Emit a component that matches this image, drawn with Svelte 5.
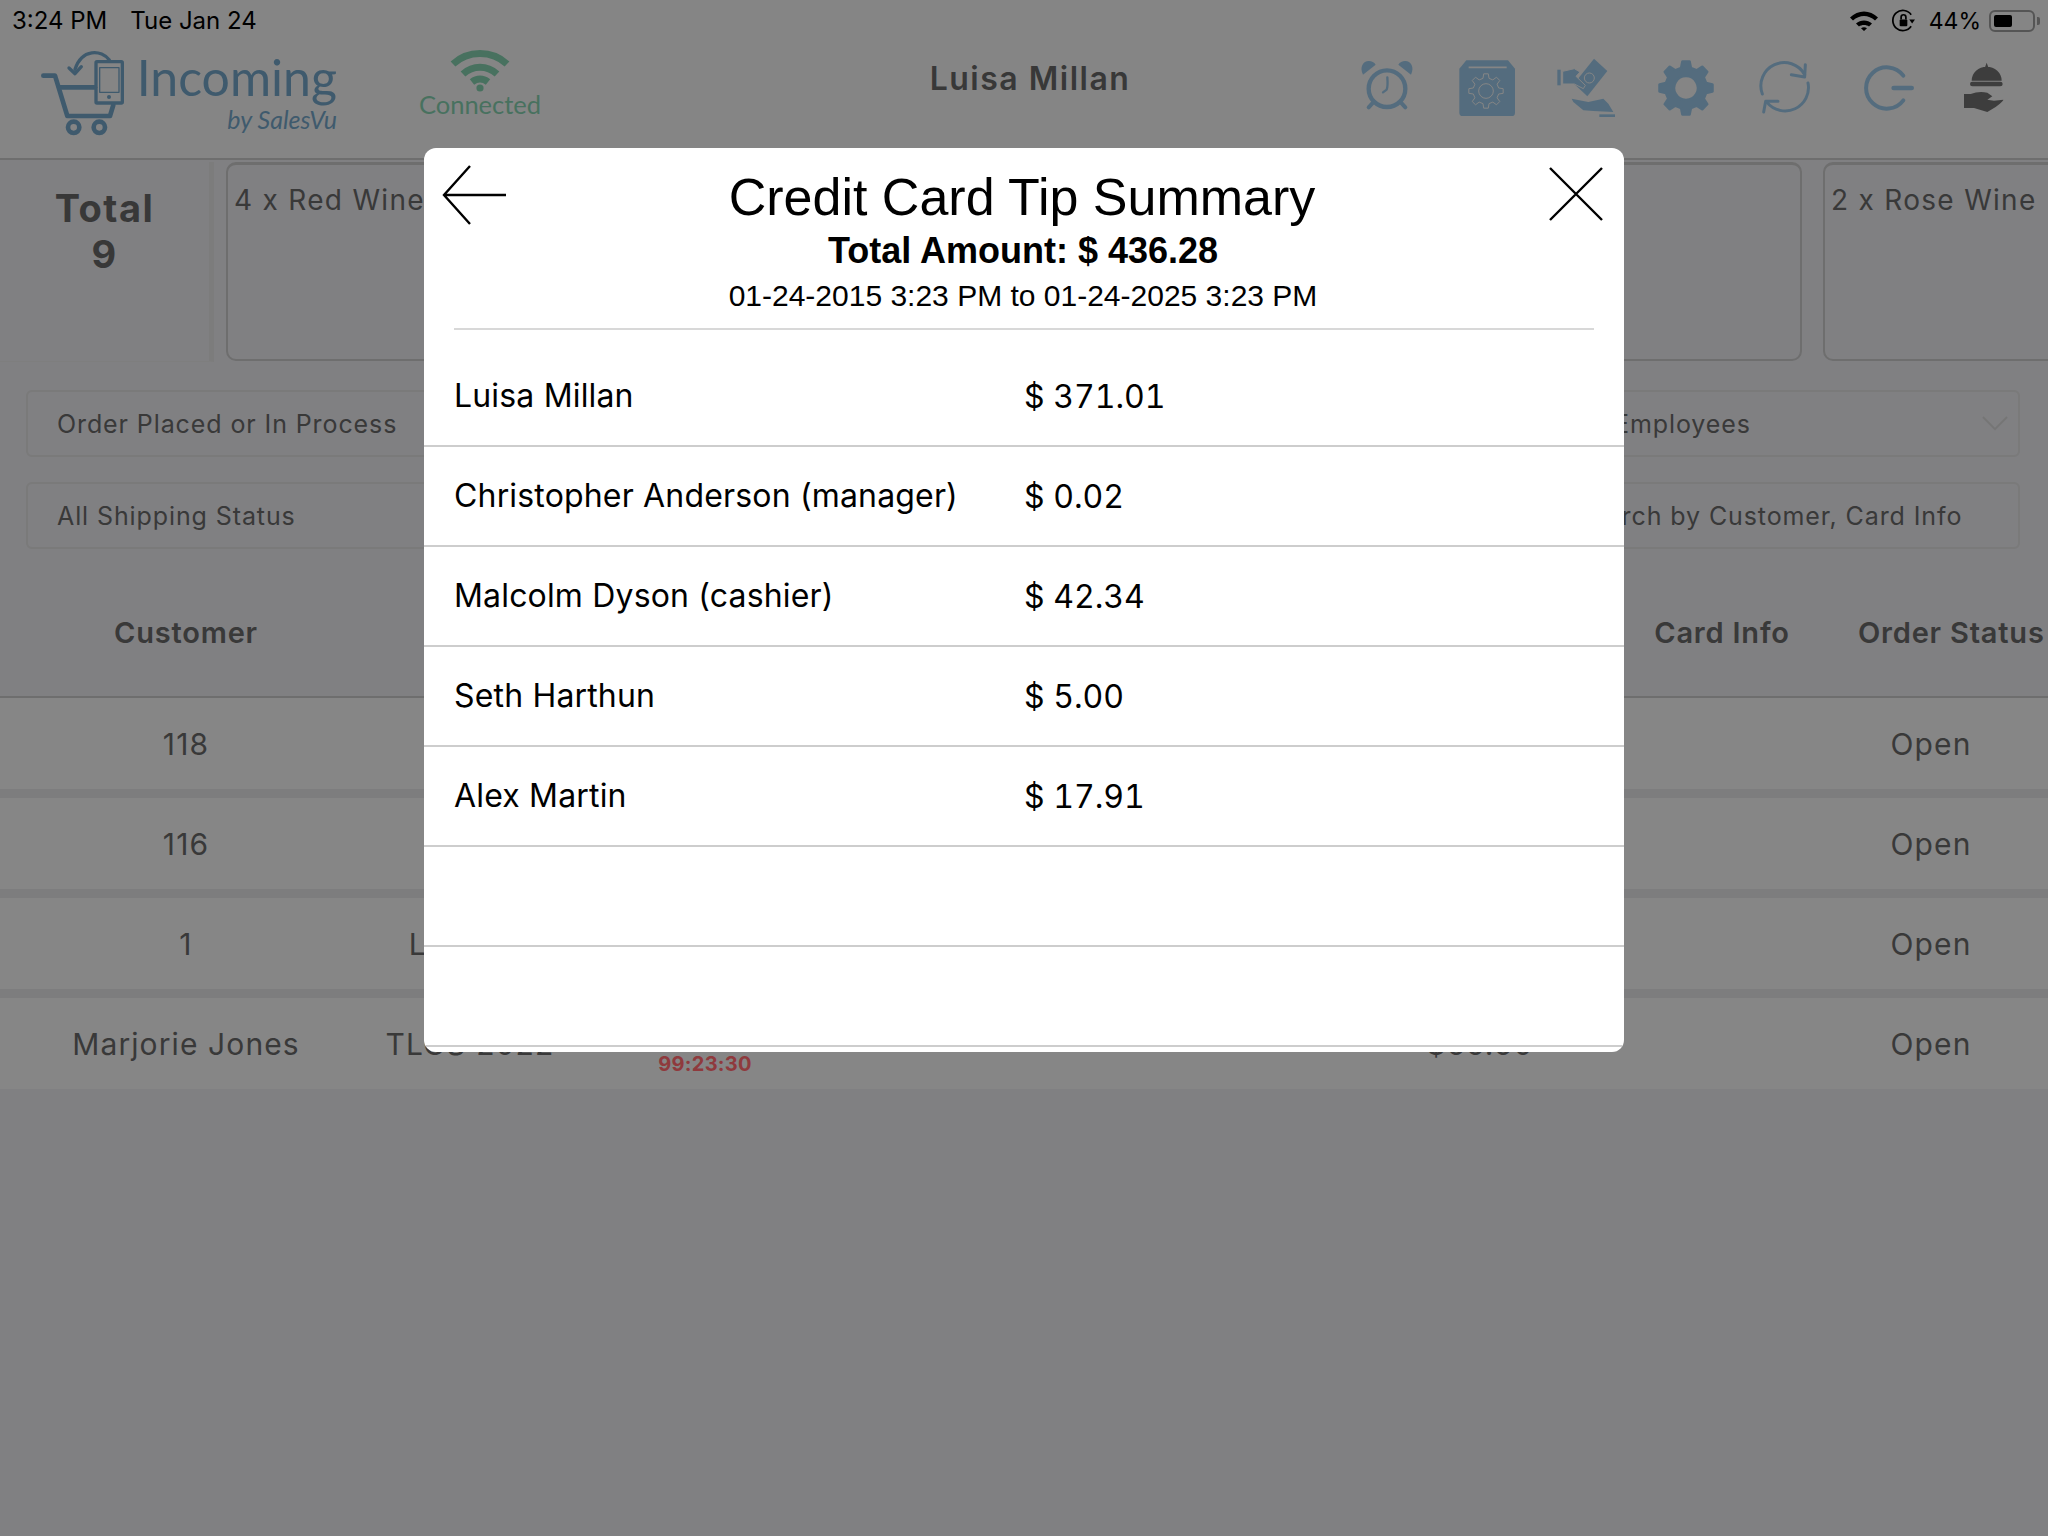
<script lang="ts">
	const cards = ['4 x Red Wine', '', '', '', '', '2 x Rose Wine'];

	const orders = [
		{ customer: '118', location: '', timer: '', price: '' },
		{ customer: '116', location: '', timer: '', price: '' },
		{ customer: '1', location: 'Lobby 2', timer: '', price: '' },
		{ customer: 'Marjorie Jones', location: 'TLCS 2022', timer: '99:23:30', price: '$55.50' }
	];

	const tips = [
		{ name: 'Luisa Millan', amount: '$ 371.01' },
		{ name: 'Christopher Anderson (manager)', amount: '$ 0.02' },
		{ name: 'Malcolm Dyson (cashier)', amount: '$ 42.34' },
		{ name: 'Seth Harthun', amount: '$ 5.00' },
		{ name: 'Alex Martin', amount: '$ 17.91' },
		{ name: '', amount: '' },
		{ name: '', amount: '' }
	];

	// toothed wheel, used by the settings icon and the one on the box
	function gear(cx: number, cy: number, outer: number, inner: number, teeth: number) {
		const step = (Math.PI * 2) / teeth;
		const pts: string[] = [];
		for (let i = 0; i < teeth; i++) {
			const a = i * step - Math.PI / 2;
			const spots = [
				[inner, a - step * 0.3],
				[outer, a - step * 0.17],
				[outer, a + step * 0.17],
				[inner, a + step * 0.3]
			];
			for (const [r, t] of spots) {
				pts.push(`${(cx + r * Math.cos(t)).toFixed(1)} ${(cy + r * Math.sin(t)).toFixed(1)}`);
			}
		}
		return 'M' + pts.join('L') + 'Z';
	}
</script>

<div class="page">
	<header class="topbar">
		<div class="brand">
			<svg class="cart" viewBox="0 0 300 300">
				<path class="b" d="M40 107H75L112 228H240L250 195" />
				<path class="b" d="M88 142H195" />
				<circle class="b" cx="131" cy="262" r="17" />
				<circle class="b" cx="208" cy="262" r="17" />
				<rect class="b thin" x="198" y="65" width="79" height="124" rx="3" />
				<rect class="b hair" x="209" y="83" width="58" height="74" />
				<circle class="dot" cx="237" cy="171" r="6" />
				<path class="b thin" d="M238 60C215 28 155 25 135 88" />
				<path class="b thin" d="M117 84L135 101L154 80" />
			</svg>
			<div class="brand-text">
				<span class="brand-name">Incoming</span>
				<span class="brand-by">by SalesVu</span>
			</div>
		</div>

		<div class="conn">
			<svg viewBox="0 0 60 42" width="60" height="42">
				<path d="M3 14C18 0 42 0 57 14" />
				<path d="M13 24C23 15 37 15 47 24" />
				<path d="M22 32C27 28 33 28 38 32" />
				<circle cx="30" cy="38" r="3.6" />
			</svg>
			<span>Connected</span>
		</div>

		<div class="user">Luisa Millan</div>

		<div class="actions">
			<span class="slot">
				<svg viewBox="0 0 180 180" class="ico">
					<circle class="line clock-ring" cx="90" cy="92" r="55" />
					<path class="line hand" d="M91 58Q93 85 89 95L78 103" />
					<path class="solid" d="M18 50C6 26 20 8 36 9C44 9 52 13 56 20Z" />
					<path class="solid" d="M162 50C174 26 160 8 144 9C136 9 128 13 124 20Z" />
					<path class="line" d="M48 134L35 148M132 134L145 148" />
				</svg>
			</span>
			<span class="slot">
				<svg viewBox="0 0 180 180" class="ico">
					<path class="solid" d="M28 7H153L174 32V164Q174 174 164 174H17Q7 174 7 164V32Z" />
					<path class="cut" d="M35 28H149" />
					<path class="cut thin-cut" d={gear(87, 99, 52, 39, 8)} />
					<circle class="cut thin-cut" cx="87" cy="99" r="22" />
				</svg>
			</span>
			<span class="slot">
				<svg viewBox="0 0 180 180" class="ico">
					<path class="solid" d="M114 2L154 39L94 115L54 77Z" />
					<circle class="solid" cx="100" cy="60" r="21" />
					<circle class="cut thin-cut" cx="100" cy="60" r="15" />
					<path class="solid" d="M4 35H14V82H4Z" />
					<path class="solid edged" d="M20 40L55 32L72 42L60 55L88 82L82 92L55 78H20Z" />
					<path class="solid" d="M47 122L97 132L142 122L157 137L172 162L112 159L82 157L52 132Z" />
					<path class="solid" d="M130 169H177V177H130Z" />
				</svg>
			</span>
			<span class="slot">
				<svg viewBox="0 0 180 180" class="ico">
					<path class="solid round" fill-rule="evenodd" d={gear(90, 90, 80, 62, 8) + 'M90 54a36 36 0 1 0 .01 0Z'} />
				</svg>
			</span>
			<span class="slot">
				<svg viewBox="0 0 180 180" class="ico">
					<path class="line mid" d="M149 50A70 70 0 0 0 22 108" />
					<path class="line mid" d="M159 75A70 70 0 0 1 36 133" />
					<path class="line mid" d="M109 50L149 57L151 20" />
					<path class="line mid" d="M69 130L32 130L26 162" />
				</svg>
			</span>
			<span class="slot">
				<svg viewBox="0 0 180 180" class="ico">
					<path class="line" d="M145 53A62 62 0 1 0 145 127" />
					<path class="line bar" d="M116 90H170" />
				</svg>
			</span>
			<span class="slot">
				<svg viewBox="0 0 180 180" class="ico dark">
					<path class="solid" d="M53 68A45 42 0 0 1 143 68ZM93 28L98 14L103 28Z" />
					<rect class="solid" x="48" y="71" width="98" height="14" rx="7" />
					<path class="solid" d="M30 108H50Q75 98 100 104L115 115L100 125L120 128L148 125Q150 128 125 147L100 162L60 150H30Z" />
				</svg>
			</span>
		</div>
	</header>

	<section class="strip">
		<div class="total">
			<span>Total</span>
			<span>9</span>
		</div>
		{#each cards as card}
			<div class="card">{card}</div>
		{/each}
	</section>

	<section class="filters">
		<div class="filter-row">
			<div class="field left">Order Placed or In Process</div>
			<div class="field right">
				All Employees
				<svg viewBox="0 0 28 16" width="26" height="15"><path d="M1 1L14 14L27 1" /></svg>
			</div>
		</div>
		<div class="filter-row">
			<div class="field left">All Shipping Status</div>
			<div class="field right">Search by Customer, Card Info</div>
		</div>
	</section>

	<div class="thead">
		<span class="c1">Customer</span>
		<span class="c6">Card Info</span>
		<span class="c7">Order Status</span>
	</div>

	{#each orders as order}
		<div class="row">
			<span class="c1">{order.customer}</span>
			<span class="c2">{order.location}</span>
			<span class="c3">{order.timer}</span>
			<span class="c5">{order.price}</span>
			<span class="c7b">Open</span>
		</div>
	{/each}
</div>

<div class="scrim">
	<div class="modal">
		<div class="modal-head">
			<button type="button" class="icon-btn" aria-label="Back">
				<svg viewBox="0 0 66 62" width="66" height="62"><path d="M65 31H3M29 2L3 31L29 60" /></svg>
			</button>
			<div class="heading">
				<h2>Credit Card Tip Summary</h2>
				<p class="amount">Total Amount: $ 436.28</p>
				<p class="range">01-24-2015 3:23 PM to 01-24-2025 3:23 PM</p>
			</div>
			<button type="button" class="icon-btn close" aria-label="Close">
				<svg viewBox="0 0 54 54" width="54" height="54"><path d="M1 1L53 53M53 1L1 53" /></svg>
			</button>
		</div>
		<div class="rule"></div>
		<ul class="tips">
			{#each tips as tip}
				<li>
					<span class="tip-name">{tip.name}</span>
					<span class="tip-amount">{tip.amount}</span>
				</li>
			{/each}
		</ul>
	</div>
</div>

<div class="statusbar">
	<div class="clock"><span>3:24 PM</span><span>Tue Jan 24</span></div>
	<div class="sys">
		<svg viewBox="0 0 28 20" width="28" height="20"><path d="M0 6.5C8 -1.5 20 -1.5 28 6.5L25 9.5C18.5 3.5 9.5 3.5 3 9.5ZM6 12.5C10.5 8.5 17.5 8.5 22 12.5L19 15.5C16.5 13.5 11.5 13.5 9 15.5ZM11 17.2C13 16 15 16 17 17.2L14 20Z" /></svg>
		<svg viewBox="0 0 24 24" width="23" height="23" class="rot">
			<path d="M20 6A10.5 10.5 0 1 0 20 18" />
			<rect x="8" y="11" width="8" height="7" rx="1" />
			<path d="M9.5 11V8.5a2.5 2.5 0 0 1 5 0V11" />
			<path class="tip" d="M18 11H24L21 15Z" />
		</svg>
		<span>44%</span>
		<div class="battery"><div class="level"></div></div>
		<div class="nub"></div>
	</div>
</div>

<style>
	:global(body) {
		margin: 0;
		background: #d5d5d9;
		overflow: hidden;
	}

	.page {
		position: relative;
		width: 2048px;
		height: 1536px;
		overflow: hidden;
		font-family: Inter, 'Liberation Sans', sans-serif;
		color: #5f5f5f;
	}

	.topbar {
		display: flex;
		align-items: flex-start;
		height: 160px;
		box-sizing: border-box;
		background: #dedede;
		border-bottom: 2px solid #b7b7b7;
	}

	.brand {
		display: flex;
		width: 420px;
		padding: 40px 0 0 30px;
		box-sizing: border-box;
	}

	.cart {
		width: 100px;
		height: 100px;
		flex: none;
		fill: none;
	}

	.b {
		stroke: #6a97b6;
		stroke-width: 14;
		fill: none;
		stroke-linecap: round;
		stroke-linejoin: round;
	}

	.b.thin {
		stroke-width: 10;
	}

	.b.hair {
		stroke-width: 4;
	}

	.dot {
		fill: #6a97b6;
	}

	.brand-text {
		display: flex;
		flex-direction: column;
		align-items: flex-end;
		margin-left: 7px;
		width: 200px;
		font-family: Lato, sans-serif;
		color: #6a97b6;
	}

	.brand-name {
		font-size: 50px;
		line-height: 60px;
		margin-top: 7px;
	}

	.brand-by {
		font-size: 25px;
		font-style: italic;
		font-weight: 400;
		line-height: 24px;
	}

	.conn {
		display: flex;
		flex-direction: column;
		align-items: center;
		width: 120px;
		margin-top: 50px;
		color: #78bd9f;
		font-family: Lato, sans-serif;
		font-size: 25.5px;
		line-height: 24px;
	}

	.conn svg {
		fill: none;
		stroke: #78bd9f;
		stroke-width: 7;
	}

	.conn circle {
		fill: #78bd9f;
		stroke: none;
	}

	.user {
		width: 400px;
		margin: 59px 0 0 290px;
		text-align: center;
		font-size: 32px;
		font-weight: 600;
		line-height: 40px;
		letter-spacing: 1.5px;
		color: #5e5e5e;
	}

	.actions {
		display: flex;
		margin: 58px 0 0 auto;
		padding-right: 14px;
	}

	.slot {
		display: flex;
		justify-content: center;
		width: 99.5px;
		height: 60px;
	}

	.ico {
		width: 60px;
		height: 60px;
	}

	.solid {
		fill: #8cb5d2;
	}

	.solid.round {
		stroke: #8cb5d2;
		stroke-width: 8;
		stroke-linejoin: round;
	}

	.solid.edged {
		stroke: #dedede;
		stroke-width: 3;
	}

	.line {
		fill: none;
		stroke: #8cb5d2;
		stroke-width: 12;
		stroke-linecap: round;
		stroke-linejoin: round;
	}

	.line.clock-ring {
		stroke-width: 13;
	}

	.line.hand {
		stroke-width: 7;
	}

	.line.mid {
		stroke-width: 9;
	}

	.line.bar {
		stroke-width: 14;
	}

	.cut {
		fill: none;
		stroke: #dedede;
		stroke-width: 5;
	}

	.cut.thin-cut {
		stroke-width: 3;
	}

	.ico.dark .solid {
		fill: #666;
	}

	.strip {
		display: flex;
		gap: 21px;
		height: 202px;
		box-sizing: border-box;
		padding-top: 2px;
	}

	.total {
		display: flex;
		flex-direction: column;
		align-items: center;
		flex: none;
		width: 209px;
		margin-right: -9px;
		padding: 23px 0 0 2px;
		margin-left: -2px;
		box-sizing: content-box;
		font-size: 38px;
		font-weight: 700;
		line-height: 46px;
		letter-spacing: 1.5px;
		color: #5e5e5e;
		border-right: 5px solid #cfcfcf;
		border-bottom: 1px solid #d3d3d3;
	}

	.card {
		flex: none;
		width: 298.4px;
		height: 199px;
		box-sizing: border-box;
		padding: 17px 6px;
		border: 2px solid #b7b7b7;
		border-top-width: 3px;
		border-radius: 10px;
		font-size: 28px;
		line-height: 36px;
		white-space: nowrap;
		letter-spacing: 1.3px;
	}

	.filters {
		display: flex;
		flex-direction: column;
		gap: 25px;
		padding: 28px 28px 0 26px;
	}

	.filter-row {
		display: flex;
		justify-content: space-between;
	}

	.field {
		display: flex;
		align-items: center;
		justify-content: space-between;
		height: 67px;
		box-sizing: border-box;
		padding: 0 10px 0 29px;
		border: 2px solid #cbcbcb;
		border-radius: 6px;
		font-size: 25px;
		letter-spacing: 0.9px;
		white-space: nowrap;
	}

	.field svg {
		fill: none;
		stroke: #c4c4c4;
		stroke-width: 2;
	}

	.left {
		width: 520px;
	}

	.right {
		width: 498px;
		padding-left: 50px;
	}

	.thead,
	.row {
		display: grid;
		grid-template-columns: 372px 196px 274px 518px 240px 244px 204px;
		align-items: center;
		text-align: center;
		white-space: nowrap;
	}

	.thead {
		height: 149px;
		box-sizing: border-box;
		padding-top: 20px;
		border-bottom: 2px solid #b7b7b7;
		font-size: 29px;
		font-weight: 600;
		letter-spacing: 0.8px;
	}

	.row {
		position: relative;
		height: 91px;
		margin-bottom: 9px;
		background: #dfdfdf;
		box-shadow: 0 9px 0 #d0d0d3;
		font-size: 30px;
		letter-spacing: 1.1px;
	}

	.row:last-child {
		box-shadow: none;
	}

	.c1 {
		grid-column: 1;
	}

	.c2 {
		grid-column: 2;
	}

	.c3 {
		grid-column: 3;
		align-self: end;
		position: relative;
		top: -13px;
		font-size: 20px;
		font-weight: 700;
		letter-spacing: 0.3px;
		color: #ee6167;
	}

	.c5 {
		grid-column: 5;
	}

	.c6 {
		grid-column: 6;
	}

	.c7 {
		grid-column: 7;
		justify-self: start;
		margin-left: 14px;
	}

	.c7b {
		grid-column: 7;
		margin-right: 30px;
	}

	.scrim {
		position: absolute;
		inset: 0;
		display: flex;
		justify-content: center;
		align-items: flex-start;
		width: 2048px;
		height: 1536px;
		padding-top: 148px;
		box-sizing: border-box;
		background: rgba(0, 0, 0, 0.4);
	}

	.modal {
		width: 1200px;
		height: 904px;
		overflow: hidden;
		background: #fff;
		border-radius: 12px;
		color: #000;
		font-family: 'Liberation Sans', Arial, sans-serif;
	}

	.modal-head {
		display: grid;
		grid-template-columns: 80px 1fr 80px;
		height: 180px;
	}

	.icon-btn {
		padding: 16px 0 0 17px;
		margin: 0;
		background: none;
		border: 0;
		align-self: start;
		text-align: left;
	}

	.icon-btn.close {
		padding: 19px 0 0 5px;
	}

	.icon-btn svg {
		display: block;
		fill: none;
		stroke: #000;
		stroke-width: 2.4;
	}

	.heading {
		text-align: center;
		padding-top: 18px;
		margin-left: -2px;
	}

	h2 {
		margin: 0 0 0 -2px;
		font-size: 52px;
		font-weight: 400;
		line-height: 62px;
	}

	.amount {
		margin: 2px 0 0;
		font-size: 36px;
		font-weight: 700;
		line-height: 42px;
	}

	.range {
		margin: 4px 0 0;
		font-size: 30px;
		line-height: 40px;
	}

	.rule {
		height: 2px;
		margin: 0 30px;
		background: #d8d8d8;
	}

	.tips {
		list-style: none;
		margin: 17px 0 0;
		padding: 0;
		font-family: Inter, 'Liberation Sans', sans-serif;
		font-size: 32px;
		letter-spacing: 0.17px;
	}

	.tips li {
		display: flex;
		align-items: center;
		height: 100px;
		box-sizing: border-box;
		padding-left: 30px;
		border-bottom: 2px solid #cdcdcd;
	}

	.tip-name {
		width: 570px;
		flex: none;
		margin-top: -2px;
	}

	.tip-amount {
		font-size: 32px;
		font-variant-numeric: tabular-nums;
		letter-spacing: 0;
	}

	.statusbar {
		position: absolute;
		top: 0;
		left: 0;
		display: flex;
		justify-content: space-between;
		align-items: center;
		box-sizing: border-box;
		width: 2048px;
		height: 41px;
		padding: 0 8px 0 12px;
		font-family: Inter, 'Liberation Sans', sans-serif;
		font-size: 24px;
		color: #000;
	}

	.clock {
		display: flex;
		gap: 23px;
	}

	.sys {
		display: flex;
		align-items: center;
		gap: 0;
		font-size: 23px;
	}

	.sys > span {
		margin: 0 8px 0 14px;
	}

	.sys svg {
		margin-right: 14px;
	}

	.sys svg:last-of-type {
		margin-right: 0;
	}

	.rot {
		fill: none;
		stroke: #000;
		stroke-width: 1.8;
	}

	.rot rect,
	.rot .tip {
		fill: #000;
		stroke: none;
	}

	.battery {
		width: 46px;
		height: 22px;
		box-sizing: border-box;
		padding: 3px;
		border: 2px solid #555;
		border-radius: 6px;
	}

	.level {
		width: 18px;
		height: 100%;
		background: #000;
		border-radius: 2px;
	}

	.nub {
		width: 3px;
		height: 8px;
		margin-left: 2px;
		background: #555;
		border-radius: 0 2px 2px 0;
	}
</style>
